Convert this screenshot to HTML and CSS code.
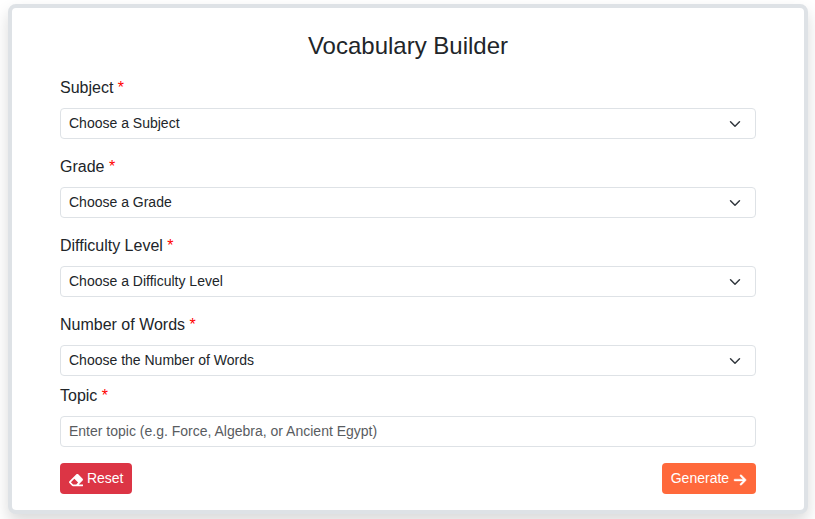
FILE: index.html
```html
<!DOCTYPE html>
<html lang="en">
<head>
<meta charset="utf-8">
<meta name="viewport" content="width=device-width, initial-scale=1">
<title>Vocabulary Builder</title>
<link rel="stylesheet" href="styles.css">
</head>
<body>
<main class="card">
  <h1 class="title">Vocabulary Builder</h1>
  <form>
    <div class="field">
      <label for="subject">Subject <span class="required">*</span></label>
      <select id="subject" class="control select"><option>Choose a Subject</option></select>
    </div>
    <div class="field">
      <label for="grade">Grade <span class="required">*</span></label>
      <select id="grade" class="control select"><option>Choose a Grade</option></select>
    </div>
    <div class="field">
      <label for="difficulty">Difficulty Level <span class="required">*</span></label>
      <select id="difficulty" class="control select"><option>Choose a Difficulty Level</option></select>
    </div>
    <div class="field field-tight">
      <label for="words">Number of Words <span class="required">*</span></label>
      <select id="words" class="control select"><option>Choose the Number of Words</option></select>
    </div>
    <div class="field">
      <label for="topic">Topic <span class="required">*</span></label>
      <input id="topic" class="control" type="text" placeholder="Enter topic (e.g. Force, Algebra, or Ancient Egypt)">
    </div>
    <div class="actions">
      <button type="reset" class="btn btn-reset"><svg class="icon" viewBox="0 0 512 512" aria-hidden="true"><path d="M497.941 273.941c18.745-18.745 18.745-49.137 0-67.882l-160-160c-18.745-18.745-49.136-18.746-67.883 0l-256 256c-18.745 18.745-18.745 49.137 0 67.882l96 96A48.004 48.004 0 0 0 144 480h356c6.627 0 12-5.373 12-12v-40c0-6.627-5.373-12-12-12H355.883l142.058-142.059zm-302.627-62.627l137.373 137.373L265.373 416H150.628l-80-80 124.686-124.686z"/></svg> Reset</button>
      <button type="submit" class="btn btn-generate">Generate <svg class="icon icon-arrow" viewBox="0 0 448 512" aria-hidden="true"><path d="M438.600 278.600c12.500-12.500 12.500-32.800 0-45.300l-160-160c-12.500-12.500-32.800-12.500-45.300 0s-12.500 32.800 0 45.300L338.800 224 32 224c-17.700 0-32 14.300-32 32s14.300 32 32 32l306.700 0L233.400 393.400c-12.500 12.500-12.500 32.800 0 45.300s32.800 12.500 45.300 0l160-160z"/></svg></button>
    </div>
  </form>
</main>
</body>
</html>
```
FILE: styles.css
```css
* {
  box-sizing: border-box;
}

body {
  min-height: 100vh;
  margin: 0;
  padding: 4px 7px 4px 8px;
  background: #fff;
  color: #212529;
  font: 16px/24px "Liberation Sans", Arial, sans-serif;
}

.card {
  padding: 24px 48px 16px;
  background: #fff;
  border: 4px solid #dee2e6;
  border-radius: 8px;
  box-shadow: 0 8px 16px rgba(0, 0, 0, 0.15);
}

.title {
  margin: 0 0 16px;
  font-size: 24px;
  font-weight: 400;
  line-height: 28px;
  text-align: center;
}

.field {
  display: flex;
  flex-direction: column;
  gap: 8px;
  margin-bottom: 16px;
}

.field-tight {
  margin-bottom: 8px;
}

.required {
  color: #f00;
}

.control {
  width: 100%;
  margin: 0;
  padding: 4px 8px;
  border: 1px solid #dee2e6;
  border-radius: 4px;
  background-color: #fff;
  color: #212529;
  font: 14px/21px "Liberation Sans", Arial, sans-serif;
}

.control::placeholder {
  color: #595c5f;
  opacity: 1;
}

.select {
  appearance: none;
  padding-right: 36px;
  background-image: url("data:image/svg+xml,%3Csvg xmlns='http://www.w3.org/2000/svg' viewBox='0 0 16 16'%3E%3Cpath fill='none' stroke='%23343a40' stroke-linecap='round' stroke-linejoin='round' stroke-width='2' d='m2 5 6 6 6-6'/%3E%3C/svg%3E");
  background-repeat: no-repeat;
  background-position: right 12px center;
  background-size: 16px 12px;
}

.actions {
  display: flex;
  justify-content: space-between;
}

.btn {
  padding: 4px 8px;
  border: 1px solid transparent;
  border-radius: 4px;
  color: #fff;
  font: 14px/21px "Liberation Sans", Arial, sans-serif;
  cursor: pointer;
}

.btn-reset {
  background-color: #dc3545;
}

.btn-generate {
  background-color: #ff693b;
}

.icon {
  width: 14px;
  height: 14px;
  fill: currentColor;
  vertical-align: -4px;
}

.icon-arrow {
  stroke: currentColor;
  stroke-width: 16px;
}
```
